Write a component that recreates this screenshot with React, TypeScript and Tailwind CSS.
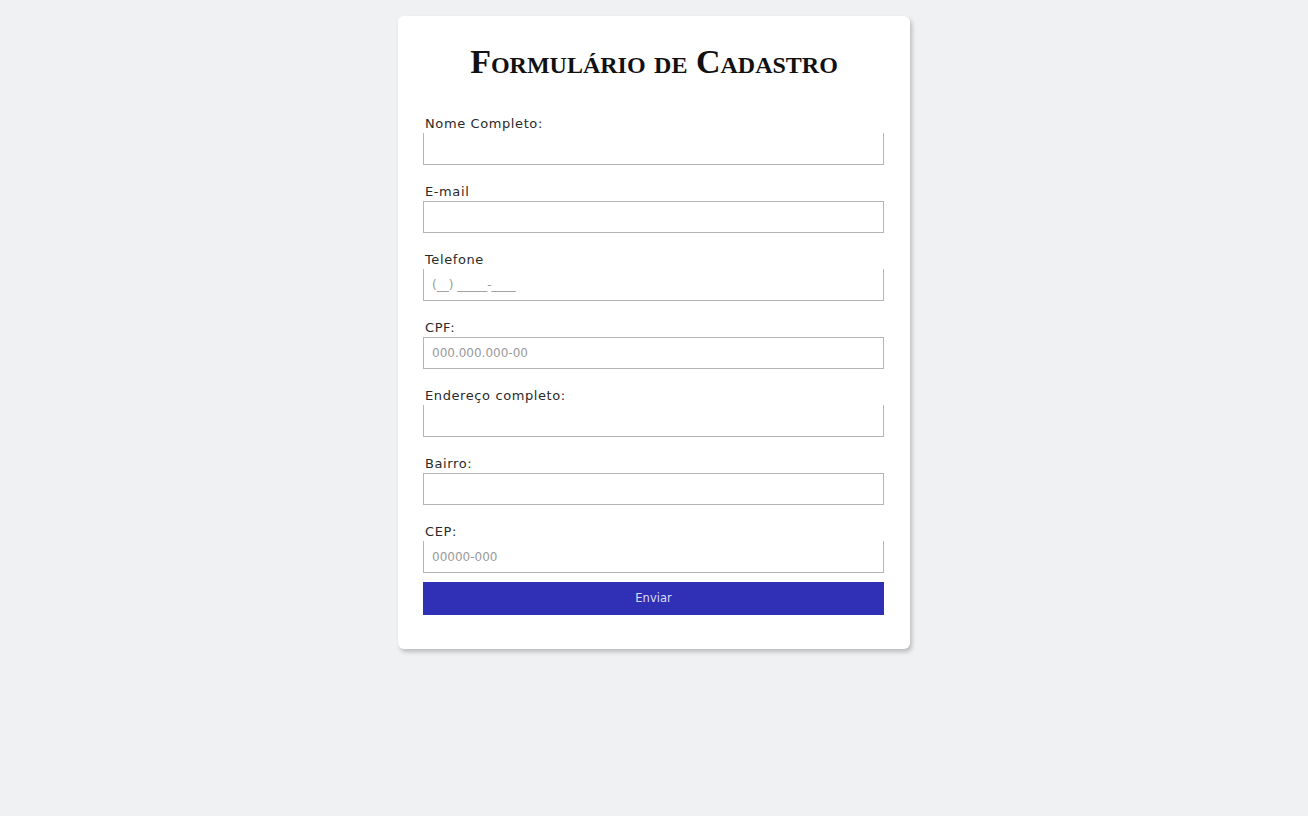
export default function App() {
  const fields = [
    { label: "Nome Completo:", placeholder: "", top: false },
    { label: "E-mail", placeholder: "", top: true },
    { label: "Telefone", placeholder: "(__) _____-____", top: false },
    { label: "CPF:", placeholder: "000.000.000-00", top: true },
    { label: "Endereço completo:", placeholder: "", top: false },
    { label: "Bairro:", placeholder: "", top: true },
    { label: "CEP:", placeholder: "00000-000", top: false },
  ];

  return (
    <div className="min-h-[816px] w-full bg-[#f0f1f3] pt-4 font-['DejaVu_Sans',sans-serif]">
      <div className="mx-auto w-[512px] rounded-md bg-white px-[25px] pb-[34px] pt-[26px] shadow-[2px_3px_4px_rgba(0,0,0,0.22)]">
        <h1 className="mb-[34px] text-center font-['Liberation_Serif',serif] text-[34px] font-bold leading-[40px] text-[#111] [font-variant:small-caps]">
          Formulário de Cadastro
        </h1>
        <form className="flex flex-col">
          {fields.map((f, i) => (
            <div key={i} className={i === fields.length - 1 ? "mb-[9px]" : "mb-[19px]"}>
              <label className="block h-4 pl-[2px] text-[13px] leading-4 tracking-[0.6px] text-[#2a2a2a]">
                {f.label}
              </label>
              <input
                className={`mt-[1px] block h-[32px] w-[461px] border border-[#b5b5b5] bg-white px-2 text-[12px] text-[#333] placeholder:text-[#9a9a9a] outline-none ${
                  f.top ? "" : "border-t-0"
                }`}
                placeholder={f.placeholder}
              />
            </div>
          ))}
          <button
            type="button"
            className="h-[33px] w-[461px] bg-[#3030b6] text-[11.5px] text-[#dcdcf5]"
          >
            Enviar
          </button>
        </form>
      </div>
    </div>
  );
}
